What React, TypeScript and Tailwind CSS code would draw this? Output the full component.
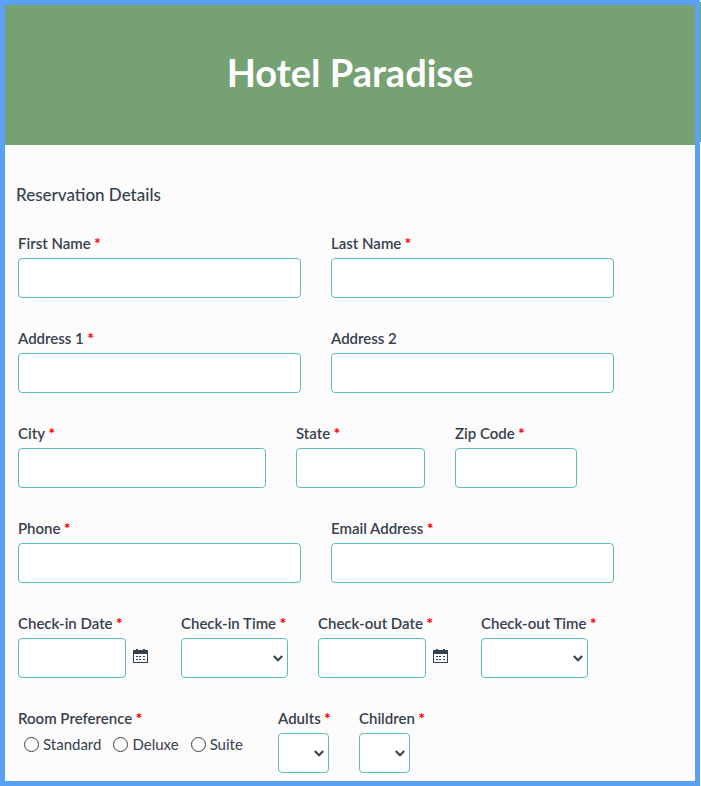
import { useId } from "react";
import type { ReactNode } from "react";

const control =
  "block h-10 w-full rounded border border-[#5bbfb9] bg-white px-2 text-[15px] text-[#3b444f] outline-none focus:ring-1 focus:ring-[#5bbfb9]";

function Star() {
  return <span className="font-black text-[#ff0000]"> *</span>;
}

type FieldProps = {
  label: string;
  required?: boolean;
  className?: string;
  type?: string;
  trailing?: ReactNode;
};

function Caption({ id, label, required }: { id: string; label: string; required: boolean }) {
  return (
    <label htmlFor={id} className="mb-[5px] block text-[15px] leading-5 font-semibold whitespace-nowrap">
      {label}
      {required && <Star />}
    </label>
  );
}

function TextField({ label, required = true, className = "", type = "text", trailing }: FieldProps) {
  const id = useId();
  return (
    <div className={className}>
      <Caption id={id} label={label} required={required} />
      <div className="flex items-center gap-[7px]">
        <input id={id} type={type} required={required} className={control} />
        {trailing}
      </div>
    </div>
  );
}

function SelectField({ label, className = "", options }: { label: string; className?: string; options: string[] }) {
  const id = useId();
  return (
    <div className={className}>
      <Caption id={id} label={label} required />
      <div className="relative">
        <select id={id} required defaultValue="" className={`${control} appearance-none`}>
          <option value="" />
          {options.map((option) => (
            <option key={option}>{option}</option>
          ))}
        </select>
        <svg
          viewBox="0 0 10 7"
          className="pointer-events-none absolute top-[17px] right-[5px] h-[7px] w-[10px]"
          fill="none"
          stroke="#3b4650"
          strokeWidth="2.2"
          aria-hidden="true"
        >
          <path d="M0.8 1 5 5.2 9.2 1" />
        </svg>
      </div>
    </div>
  );
}

function CalendarButton({ label }: { label: string }) {
  return (
    <button type="button" aria-label={label} className="shrink-0 pb-1">
      <svg viewBox="0 0 15 14" className="block h-[14px] w-[15px]" fill="#36424d" aria-hidden="true">
        <path d="M0 1h3V0h2v1h5V0h2v1h3v13H0zM1 5v8h13V5z" fillRule="evenodd" />
        <path d="M3 7h2v1H3zM6 7h2v1H6zM10 7h2v1h-2zM3 10h2v1H3zM6 10h2v1H6zM10 10h2v1h-2z" />
      </svg>
    </button>
  );
}

const times = ["12:00 PM", "1:00 PM", "2:00 PM", "3:00 PM", "4:00 PM"];
const counts = ["1", "2", "3", "4"];

export default function App() {
  return (
    <div className="flex min-h-screen bg-white font-['Lato','Liberation_Sans',sans-serif] text-[#37414d]">
      <main className="min-w-0 flex-1 border-[5px] border-[#5aa1f4] bg-[#fcfcfc]">
        <header className="flex h-[140px] items-center justify-center bg-[#76a173] pb-1.5">
          <h1 className="text-[38px] leading-[48px] font-bold text-white">Hotel Paradise</h1>
        </header>
        <form className="pt-[38px] pr-[81px] pb-2 pl-[13px]">
          <h2 className="mb-[26px] -ml-0.5 text-[17px] leading-6 font-medium">Reservation Details</h2>
          <div className="flex flex-col gap-[30px]">
            <div className="grid grid-cols-2 gap-[30px]">
              <TextField label="First Name" />
              <TextField label="Last Name" />
            </div>
            <div className="grid grid-cols-2 gap-[30px]">
              <TextField label="Address 1" />
              <TextField label="Address 2" required={false} />
            </div>
            <div className="flex gap-[30px] pr-[37px]">
              <TextField label="City" className="flex-1" />
              <TextField label="State" className="w-[129px]" />
              <TextField label="Zip Code" className="w-[122px]" />
            </div>
            <div className="grid grid-cols-2 gap-[30px]">
              <TextField label="Phone" type="tel" />
              <TextField label="Email Address" type="email" />
            </div>
            <div className="flex flex-wrap gap-[30px]">
              <TextField
                label="Check-in Date"
                className="w-[133px] pr-[3px]"
                trailing={<CalendarButton label="Choose check-in date" />}
              />
              <SelectField label="Check-in Time" className="w-[107px]" options={times} />
              <TextField
                label="Check-out Date"
                className="w-[133px] pr-[3px]"
                trailing={<CalendarButton label="Choose check-out date" />}
              />
              <SelectField label="Check-out Time" className="w-[107px]" options={times} />
            </div>
            <div className="flex flex-wrap gap-[30px]">
              <fieldset className="w-[230px]">
                <legend className="text-[15px] leading-5 font-semibold">
                  Room Preference
                  <Star />
                </legend>
                <div className="mt-[6px] flex gap-3 pl-[6px] text-[15px] leading-5">
                  {["Standard", "Deluxe", "Suite"].map((room) => (
                    <label key={room} className="flex items-center gap-1">
                      <input
                        type="radio"
                        name="room"
                        value={room}
                        className="size-[15px] shrink-0 appearance-none rounded-full border border-[#37414d] checked:border-[5px]"
                      />
                      {room}
                    </label>
                  ))}
                </div>
              </fieldset>
              <SelectField label="Adults" className="w-[51px]" options={counts} />
              <SelectField label="Children" className="w-[51px]" options={counts} />
            </div>
          </div>
        </form>
      </main>
      <div className="w-px shrink-0 pt-0.5" aria-hidden="true">
        <div className="h-[140px] bg-[#76a173]" />
      </div>
    </div>
  );
}
